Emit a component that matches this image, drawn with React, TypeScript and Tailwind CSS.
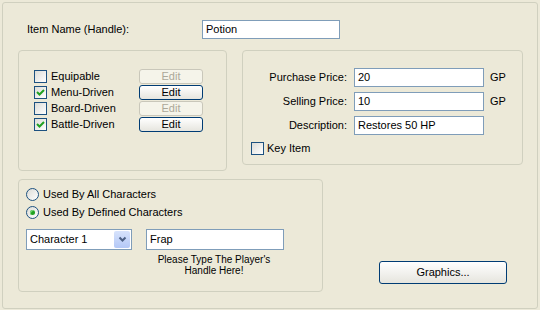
import React from "react";

const font = { fontFamily: '"Liberation Sans", Arial, sans-serif' };

function Check({ checked }: { checked?: boolean }) {
  return (
    <div className="w-[13px] h-[13px] border border-[#1c5180] bg-gradient-to-br from-[#dcdcd7] to-[#ffffff] shrink-0 flex items-center justify-center">
      {checked && (
        <svg width="11" height="11" viewBox="0 0 11 11">
          <polyline points="2,5 4.5,7.5 9,3" fill="none" stroke="#21a121" strokeWidth="2" />
        </svg>
      )}
    </div>
  );
}

function Radio({ checked }: { checked?: boolean }) {
  return (
    <div className="w-[13px] h-[13px] rounded-full border border-[#1c5180] bg-gradient-to-br from-[#dcdcd7] to-[#ffffff] shrink-0 flex items-center justify-center">
      {checked && <div className="w-[5px] h-[5px] rounded-full bg-[#21a121] shadow-[inset_1px_1px_0_#7ad77a]" />}
    </div>
  );
}

function EditBtn({ enabled }: { enabled?: boolean }) {
  return enabled ? (
    <div className="ml-auto mt-[1px] w-[64px] h-[15px] rounded-[3px] border border-[#003c74] bg-gradient-to-b from-[#ffffff] to-[#e6e5de] flex items-center justify-center text-black leading-none">
      Edit
    </div>
  ) : (
    <div className="ml-auto mt-[1px] w-[64px] h-[15px] rounded-[3px] border border-[#c9c7ba] bg-[#f5f4ea] flex items-center justify-center text-[#aca899] leading-none">
      Edit
    </div>
  );
}

function Input({ value, w, h }: { value: string; w: string; h: string }) {
  return (
    <div className={`${w} ${h} border border-[#7f9db9] bg-white pl-[3px] flex items-center text-black`}>{value}</div>
  );
}

export default function App() {
  const checks = [
    { label: "Equipable", c: false },
    { label: "Menu-Driven", c: true },
    { label: "Board-Driven", c: false },
    { label: "Battle-Driven", c: true },
  ];
  return (
    <div className="w-[540px] h-[310px] bg-[#ece9d8] p-[2px] text-[11px] text-black" style={font}>
      <div className="w-[536px] h-[307px] border border-[#d0d0bf] rounded-[3px] pl-[15px] pt-[17px]">
        {/* row 1 */}
        <div className="flex items-center h-[19px]">
          <div className="ml-[9px] w-[175px]">Item Name (Handle):</div>
          <Input value="Potion" w="w-[138px]" h="h-[19px]" />
        </div>
        {/* row 2 */}
        <div className="flex items-start mt-[11px]">
          <div className="w-[209px] h-[121px] border border-[#d0d0bf] rounded-[4px] pl-[15px] pr-[23px] pt-[17px]">
            {checks.map((r) => (
              <div key={r.label} className="flex items-start h-[16px]">
                <div className="mt-[2px]">
                  <Check checked={r.c} />
                </div>
                <div className="ml-[4px] mt-[1px] leading-[15px]">{r.label}</div>
                <EditBtn enabled={r.c} />
              </div>
            ))}
          </div>
          <div className="ml-[15px] w-[281px] h-[115px] border border-[#d0d0bf] rounded-[4px] pt-[17px]">
            {[
              { l: "Purchase Price:", v: "20", gp: true },
              { l: "Selling Price:", v: "10", gp: true },
              { l: "Description:", v: "Restores 50 HP", gp: false },
            ].map((r, i) => (
              <div key={r.l} className={`flex items-center h-[19px] ${i > 0 ? "mt-[5px]" : ""}`}>
                <div className="w-[104px] text-right">{r.l}</div>
                <div className="ml-[7px]">
                  <Input value={r.v} w="w-[130px]" h="h-[19px]" />
                </div>
                {r.gp && <div className="ml-[6px]">GP</div>}
              </div>
            ))}
            <div className="flex items-center h-[13px] mt-[7px] ml-[8px]">
              <Check />
              <div className="ml-[3px]">Key Item</div>
            </div>
          </div>
        </div>
        {/* row 3 */}
        <div className="flex items-end mt-[8px]">
          <div className="w-[305px] h-[113px] border border-[#d0d0bf] rounded-[4px] pl-[7px] pt-[8px]">
            <div className="flex items-center h-[13px]">
              <Radio />
              <div className="ml-[4px]">Used By All Characters</div>
            </div>
            <div className="flex items-center h-[13px] mt-[5px]">
              <Radio checked />
              <div className="ml-[4px]">Used By Defined Characters</div>
            </div>
            <div className="flex items-start mt-[10px]">
              <div className="w-[106px] h-[21px] border border-[#7f9db9] bg-white flex items-center pl-[3px] pr-[1px]">
                <div className="flex-1">Character 1</div>
                <div className="w-[16px] h-[17px] rounded-[2px] bg-gradient-to-b from-[#d7e3fc] to-[#b4c8f6] flex items-center justify-center">
                  <svg width="9" height="7" viewBox="0 0 9 7">
                    <polyline points="1.5,1.5 4.5,4.5 7.5,1.5" fill="none" stroke="#4d6185" strokeWidth="2" />
                  </svg>
                </div>
              </div>
              <div className="ml-[14px]">
                <Input value="Frap" w="w-[138px]" h="h-[21px]" />
              </div>
            </div>
            <div className="ml-[113px] w-[150px] mt-[4px] text-center text-[10px] leading-[11px]">
              Please Type The Player's
              <br />
              Handle Here!
            </div>
          </div>
          <div className="ml-[56px] mb-[8px] w-[128px] h-[23px] rounded-[3px] border border-[#003c74] bg-gradient-to-b from-[#ffffff] to-[#e6e5de] flex items-center justify-center">
            Graphics...
          </div>
        </div>
      </div>
    </div>
  );
}
